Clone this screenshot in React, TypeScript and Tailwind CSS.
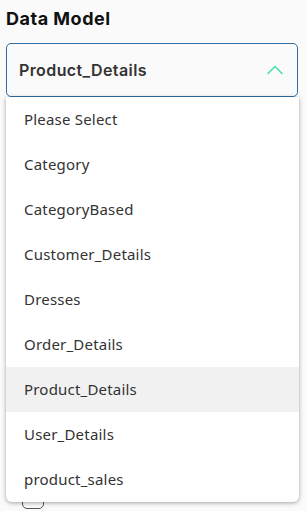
import { ChevronUp } from 'lucide-react';

const options = [
  'Please Select',
  'Category',
  'CategoryBased',
  'Customer_Details',
  'Dresses',
  'Order_Details',
  'Product_Details',
  'User_Details',
  'product_sales',
];

export default function App() {
  const selected = 'Product_Details';

  return (
    <div className="w-[307px] h-[511px] overflow-hidden bg-[#fafafa] px-[6px] pt-[7px] font-['Open_Sans',sans-serif]">
      {/* Label */}
      <h2 className="text-[18px] leading-[24px] font-bold text-[#111] font-['Inter',sans-serif] tracking-[0.5px]">
        Data Model
      </h2>

      <div className="relative mt-[12px] w-[292px]">
        {/* Select trigger */}
        <button className="flex items-center justify-between w-full h-[54px] pl-[12px] pr-[8px] rounded-[5px] border border-[#2f6ea8] bg-[#fafafa] text-left">
          <span className="text-[16px] font-semibold text-[#333] font-['Inter',sans-serif] tracking-[0.4px]">
            {selected}
          </span>
          <ChevronUp size={28} strokeWidth={1.3} className="text-[#43e0a5]" />
        </button>

        {/* Content behind the menu */}
        <div className="flex justify-end mt-[22px]">
          <div className="w-[2px] h-[10px] bg-[#999]" />
        </div>
        <div className="mt-[358px] ml-[16px] w-[22px] h-[22px] rounded-[5px] border-[1.5px] border-[#555]" />

        {/* Menu */}
        <ul className="absolute left-0 top-[54px] w-[293px] bg-white rounded-b-[6px] shadow-[0_1px_4px_rgba(0,0,0,0.35)] overflow-hidden font-['Noto_Sans',sans-serif]">
          {options.map((opt) => (
            <li
              key={opt}
              className={`h-[45px] flex items-center pl-[18px] text-[15px] tracking-[0.2px] text-[#333] ${
                opt === selected ? 'bg-[#f1f1f1]' : ''
              }`}
            >
              {opt}
            </li>
          ))}
        </ul>
      </div>
    </div>
  );
}
